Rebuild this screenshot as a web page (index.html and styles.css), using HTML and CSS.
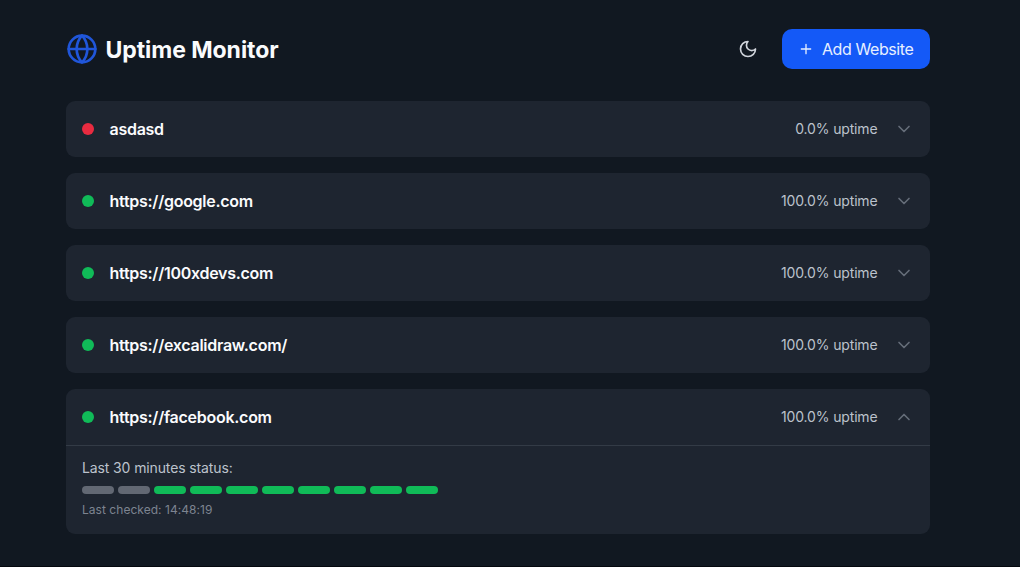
FILE: index.html
```html
<!DOCTYPE html>
<html lang="en">
<head>
<meta charset="utf-8">
<title>Uptime Monitor</title>
<link rel="stylesheet" href="styles.css">
</head>
<body>
<main class="page">
  <header class="header">
    <div class="brand">
      <svg class="globe" viewBox="0 0 24 24"><circle cx="12" cy="12" r="10"/><path d="M12 2a14.5 14.5 0 0 0 0 20 14.5 14.5 0 0 0 0-20"/><path d="M2 12h20"/></svg>
      <h1 class="title">Uptime Monitor</h1>
    </div>
    <div class="actions">
      <button class="theme" aria-label="Toggle theme"><svg class="moon" viewBox="0 0 24 24"><path d="M12 3a6 6 0 0 0 9 9 9 9 0 1 1-9-9Z"/></svg></button>
      <button class="add"><svg class="plus" viewBox="0 0 24 24"><path d="M5 12h14M12 5v14"/></svg><span>Add Website</span></button>
    </div>
  </header>
  <section class="list">
    <article class="card"><div class="row"><span class="dot down"></span><h2 class="name">asdasd</h2><span class="uptime">0.0% uptime</span><svg class="chevron" viewBox="0 0 24 24"><path d="m6 9 6 6 6-6"/></svg></div></article>
    <article class="card"><div class="row"><span class="dot"></span><h2 class="name">https://google.com</h2><span class="uptime">100.0% uptime</span><svg class="chevron" viewBox="0 0 24 24"><path d="m6 9 6 6 6-6"/></svg></div></article>
    <article class="card"><div class="row"><span class="dot"></span><h2 class="name">https://100xdevs.com</h2><span class="uptime">100.0% uptime</span><svg class="chevron" viewBox="0 0 24 24"><path d="m6 9 6 6 6-6"/></svg></div></article>
    <article class="card"><div class="row"><span class="dot"></span><h2 class="name">https://excalidraw.com/</h2><span class="uptime">100.0% uptime</span><svg class="chevron" viewBox="0 0 24 24"><path d="m6 9 6 6 6-6"/></svg></div></article>
    <article class="card"><div class="row"><span class="dot"></span><h2 class="name">https://facebook.com</h2><span class="uptime">100.0% uptime</span><svg class="chevron" viewBox="0 0 24 24"><path d="m18 15-6-6-6 6"/></svg></div>
      <div class="details">
        <p class="label">Last 30 minutes status:</p>
        <div class="ticks"><i class="tick unknown"></i><i class="tick unknown"></i><i class="tick"></i><i class="tick"></i><i class="tick"></i><i class="tick"></i><i class="tick"></i><i class="tick"></i><i class="tick"></i><i class="tick"></i></div>
        <p class="checked">Last checked: 14:48:19</p>
      </div>
    </article>
  </section>
</main>
</body>
</html>
```

FILE: styles.css
```css
* { box-sizing: border-box; margin: 0; padding: 0; }
body { height: 567px; border-bottom: 1px solid #05080e; background: #111821; color: #fafbfd; font-family: Inter, "Liberation Sans", sans-serif; }
svg { display: block; fill: none; stroke: currentColor; stroke-width: 2; stroke-linecap: round; stroke-linejoin: round; flex: none; }
button { border: 0; background: none; color: inherit; font: inherit; }
.page { width: 864px; margin-left: 66px; padding-top: 29px; }
.header { display: flex; justify-content: space-between; align-items: center; height: 40px; margin-bottom: 32px; }
.brand { display: flex; align-items: center; gap: 7.5px; }
.globe { width: 32px; height: 32px; color: #2056da; }
.title { padding-top: 2px; font-size: 23px; line-height: 32px; font-weight: 650; font-optical-sizing: none; letter-spacing: -0.06px; white-space: nowrap; }
.actions { display: flex; align-items: center; gap: 16px; }
.theme { padding: 8px; }
.moon { width: 20px; height: 20px; color: #d1d5dc; }
.add { display: flex; align-items: center; gap: 8px; height: 40px; width: 148px; padding: 0 16px; background: #1459f7; border-radius: 10px; color: #e6efff; font-size: 16px; letter-spacing: -0.42px; white-space: nowrap; }
.plus { width: 16px; height: 16px; }
.list { display: flex; flex-direction: column; gap: 16px; }
.card { background: #1e2530; border-radius: 9px; }
.row { display: flex; align-items: center; height: 56px; padding: 0 16px; }
.dot { width: 12px; height: 12px; border-radius: 50%; background: #10bb58; margin-right: 15.5px; }
.dot.down { background: #e92b40; }
.name { flex: 1; font-size: 16px; font-weight: 570; letter-spacing: -0.27px; }
.uptime { padding-bottom: 1px; font-size: 14px; line-height: 20px; letter-spacing: -0.15px; color: #bcc2cc; margin-right: 16.5px; }
.chevron { width: 20px; height: 20px; color: #656d79; }
.details { height: 88.5px; padding: 12px 16px 0; border-top: 1px solid #333b46; }
.label { font-size: 14px; line-height: 20px; letter-spacing: -0.12px; color: #bcc2cc; }
.ticks { display: flex; gap: 4px; margin: 8px 0; }
.tick { width: 32px; height: 8px; border-radius: 4px; background: #10bb58; }
.tick.unknown { background: #626873; }
.checked { font-size: 12px; line-height: 16px; letter-spacing: 0.04px; color: #7d8490; }
```
